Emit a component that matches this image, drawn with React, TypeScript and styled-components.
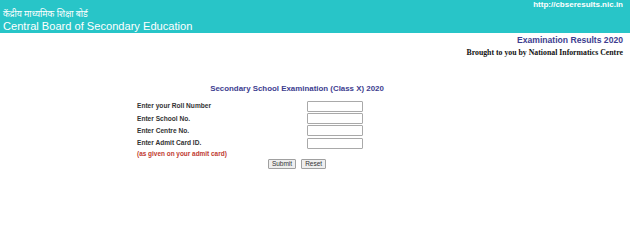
import React from "react";
import styled, { createGlobalStyle } from "styled-components";

const Global = createGlobalStyle`
  html, body { margin: 0; padding: 0; background: #ffffff; }
  body { font-family: "Liberation Sans", Arial, sans-serif; }
`;

const Header = styled.header`
  height: 33px;
  background: #28c5c8;
  display: flex;
  justify-content: space-between;
  align-items: flex-start;
  padding: 0 7px 0 3px;
  box-sizing: border-box;
`;

const Brand = styled.div`
  display: flex;
  flex-direction: column;
  padding-top: 9px;
`;

const HindiName = styled.div`
  font-family: "Noto Sans", "Noto Sans Devanagari", "Liberation Sans", sans-serif;
  font-size: 8.8px;
  line-height: 11px;
  color: #ffffff;
`;

const EnglishName = styled.div`
  font-family: "Liberation Sans", Arial, sans-serif;
  font-size: 11.1px;
  line-height: 12px;
  color: #ffffff;
`;

const SiteUrl = styled.div`
  font-family: "Liberation Sans", Arial, sans-serif;
  font-weight: bold;
  font-size: 8px;
  line-height: 10px;
  color: #ffffff;
`;

const ResultsBlock = styled.div`
  display: flex;
  flex-direction: column;
  align-items: flex-end;
  padding: 2px 7px 0 0;
`;

const ResultsTitle = styled.div`
  font-family: "Liberation Sans", Arial, sans-serif;
  font-weight: bold;
  font-size: 8.6px;
  line-height: 11px;
  color: #3d3d8f;
`;

const Credit = styled.div`
  font-family: "Liberation Serif", "Times New Roman", serif;
  font-weight: bold;
  font-size: 7.8px;
  line-height: 10px;
  color: #111111;
  margin-top: 2px;
`;

const FormArea = styled.section`
  width: 320px;
  margin: 26px 0 0 137px;
  display: flex;
  flex-direction: column;
`;

const FormTitle = styled.div`
  font-family: "Liberation Sans", Arial, sans-serif;
  font-weight: bold;
  font-size: 7.9px;
  line-height: 10px;
  color: #3d3d8f;
  text-align: center;
  margin-bottom: 6px;
`;

const Fields = styled.div`
  display: grid;
  grid-template-columns: 170px 56px;
  grid-auto-rows: 12.4px;
  align-items: center;
`;

const Label = styled.label`
  font-family: "Liberation Sans", Arial, sans-serif;
  font-weight: bold;
  font-size: 6.6px;
  line-height: 8px;
  color: #333333;
`;

const Field = styled.input`
  box-sizing: border-box;
  width: 56px;
  height: 11px;
  margin: 0;
  padding: 0 2px;
  border: 1px solid #a9a9a9;
  border-radius: 1px;
  background: #ffffff;
  font-size: 7px;
  outline: none;
`;

const Note = styled.div`
  font-family: "Liberation Sans", Arial, sans-serif;
  font-weight: bold;
  font-size: 6.45px;
  line-height: 8px;
  color: #c0392f;
`;

const Buttons = styled.div`
  display: flex;
  justify-content: center;
  gap: 5px;
  margin-top: 1px;
`;

const Btn = styled.button`
  box-sizing: border-box;
  height: 10px;
  padding: 0 3px;
  margin: 0;
  border: 1px solid #a0a0a0;
  border-radius: 1px;
  background: #eeeeee;
  font-family: "Liberation Sans", Arial, sans-serif;
  font-size: 6.5px;
  line-height: 8px;
  color: #333333;
`;

const fields = [
  "Enter your Roll Number",
  "Enter School No.",
  "Enter Centre No.",
  "Enter Admit Card ID.",
];

export default function App() {
  return (
    <>
      <Global />
      <Header>
        <Brand>
          <HindiName>केंद्रीय माध्यमिक शिक्षा बोर्ड</HindiName>
          <EnglishName>Central Board of Secondary Education</EnglishName>
        </Brand>
        <SiteUrl>http://cbseresults.nic.in</SiteUrl>
      </Header>
      <ResultsBlock>
        <ResultsTitle>Examination Results 2020</ResultsTitle>
        <Credit>Brought to you by National Informatics Centre</Credit>
      </ResultsBlock>
      <FormArea>
        <FormTitle>Secondary School Examination (Class X) 2020</FormTitle>
        <Fields>
          {fields.map((f) => (
            <React.Fragment key={f}>
              <Label>{f}</Label>
              <Field type="text" />
            </React.Fragment>
          ))}
        </Fields>
        <Note>(as given on your admit card)</Note>
        <Buttons>
          <Btn type="button">Submit</Btn>
          <Btn type="button">Reset</Btn>
        </Buttons>
      </FormArea>
    </>
  );
}
